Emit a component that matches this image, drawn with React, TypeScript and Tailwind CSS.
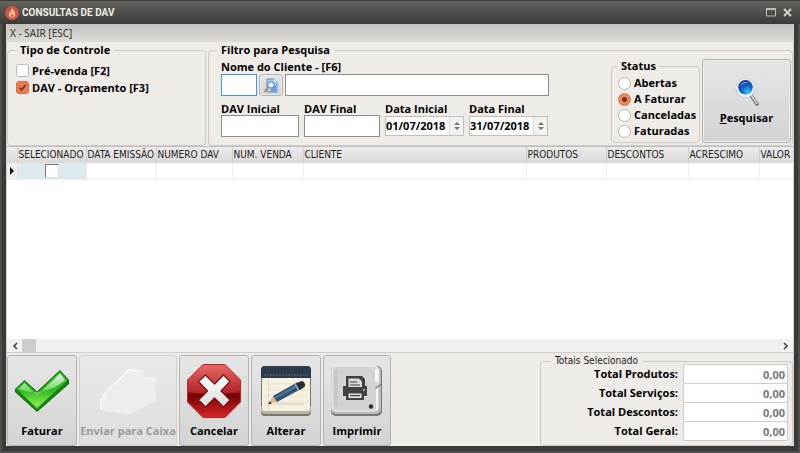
import { useState } from 'react'
import clsx from 'clsx'

interface Column {
  title: string
  width: string
}

const COLUMNS: Column[] = [
  { title: 'SELECIONADO', width: 'w-[69px]' },
  { title: 'DATA EMISSÃO', width: 'w-[70px]' },
  { title: 'NUMERO DAV', width: 'w-[76px]' },
  { title: 'NUM. VENDA', width: 'w-[71px]' },
  { title: 'CLIENTE', width: '' },
  { title: 'PRODUTOS', width: 'w-[80px]' },
  { title: 'DESCONTOS', width: 'w-[82px]' },
  { title: 'ACRESCIMO', width: 'w-[71px]' },
  { title: 'VALOR', width: 'w-[34px]' },
]

const STATUS = ['Abertas', 'A Faturar', 'Canceladas', 'Faturadas']

const TOTALS = [
  { id: 'produtos', label: 'Total Produtos:' },
  { id: 'servicos', label: 'Total Serviços:' },
  { id: 'descontos', label: 'Total Descontos:' },
  { id: 'geral', label: 'Total Geral:' },
]

const buttonFace = 'rounded-[3px] border border-[#b4b2b0] bg-linear-to-b from-[#e6e6e6] to-[#d3d3d3] shadow-[inset_0_0_0_1px_#ececec]'

function FlameIcon() {
  return (
    <svg viewBox="0 0 14 14" className="h-3.5 w-3.5 shrink-0">
      <circle cx="7" cy="7" r="7" fill="#cf5355" />
      <path d="M7.3 2c.5 2 2.9 3.4 2.9 6.2A3.2 3.2 0 0 1 7 11.6a3.2 3.2 0 0 1-3.2-3.3c0-1.3.6-2.2 1.1-2.9.1.8.4 1.2.8 1.4C5.7 5 6.3 3.3 7.3 2z" fill="#f7c57c" />
      <path d="M7.2 7.600c.2.8.9 1.200.9 2.200a1.100 1.100 0 0 1-2.200 0c0-.8.9-1.300 1.300-2.200z" fill="#cf5355" />
    </svg>
  )
}

function MagnifierIcon() {
  return (
    <svg viewBox="0 0 24 28" className="h-7 w-6">
      <defs>
        <radialGradient id="lens" cx="0.65" cy="0.8" r="0.8">
          <stop offset="0" stopColor="#36c8f5" />
          <stop offset="0.5" stopColor="#1565c4" />
          <stop offset="1" stopColor="#0a3a92" />
        </radialGradient>
      </defs>
      <path d="M16 17.5l6 8.500" stroke="#77797c" strokeWidth="3.600" strokeLinecap="round" />
      <path d="M16.300 17.300l5.500 8" stroke="#e4e6e8" strokeWidth="1.400" strokeLinecap="round" />
      <circle cx="10.500" cy="10" r="10" fill="#b9bfc7" />
      <circle cx="10.500" cy="9.800" r="9.300" fill="#f1f4f7" />
      <circle cx="10.500" cy="9.300" r="7.300" fill="url(#lens)" />
      <path d="M5 8a6 5.500 0 0 1 9-3.200c-3-.4-6.500.4-9 3.200z" fill="#9cc4ee" opacity=".8" />
    </svg>
  )
}

function LookupIcon() {
  return (
    <svg viewBox="0 0 14 15" className="h-[15px] w-3.5">
      <path d="M3 1h7l3 3v10H3z" fill="#b5d4f3" stroke="#5b8fd0" />
      <path d="M10 1v3h3z" fill="#e9f3fd" />
      <path d="M12 7v6.500H5z" fill="#6d9fe0" />
      <path d="M1 13.200l3.600-4" stroke="#c9854f" strokeWidth="2" strokeLinecap="round" />
      <circle cx="7" cy="6.800" r="3.200" fill="#eaf6ff" stroke="#5787c2" strokeWidth="1.100" />
    </svg>
  )
}

function CheckIcon() {
  return (
    <svg viewBox="0 0 56 54" className="h-[54px] w-14">
      <defs>
        <linearGradient id="green" x1="0" y1="0" x2="0" y2="1">
          <stop offset="0" stopColor="#3cc436" />
          <stop offset="0.500" stopColor="#2eb81c" />
          <stop offset="1" stopColor="#9af45e" />
        </linearGradient>
        <linearGradient id="gloss" x1="0" y1="0" x2="0" y2="1">
          <stop offset="0" stopColor="#fff" stopOpacity=".9" />
          <stop offset="1" stopColor="#c9f5b8" stopOpacity=".3" />
        </linearGradient>
      </defs>
      <path d="M1 25L10.500 16 23 27.500 46 6l9 10v4L23 48 1 28z" fill="#126b12" />
      <path d="M2.500 25L10.500 17.500 23 29.500 46 7.500l7.500 9L23 44.500z" fill="url(#green)" stroke="#26a51c" />
      <path d="M4.500 25l6-5.700L23 31.500 46 9.500l5 6.500C40 26 22 32 4.500 25z" fill="url(#gloss)" />
      <path d="M2.500 27.500L23 46l31-27" fill="none" stroke="#1d8a17" strokeWidth="1.200" />
    </svg>
  )
}

function SendIcon() {
  return (
    <svg viewBox="0 0 56 54" className="h-[54px] w-14">
      <path d="M1 35.500L4 30l3-1L24 10l5-5 13 2 2 6 10 2 2 22-28 14L1 46z" fill="#ededed" />
      <path d="M1 46V35.500h3V30l20-19 5-5.500 13 2.500M43 14l11 1 1 4" fill="none" stroke="#fff" strokeWidth="1.200" />
    </svg>
  )
}

function CancelIcon() {
  return (
    <svg viewBox="0 0 54 54" className="h-[54px] w-[54px]">
      <defs>
        <linearGradient id="red" x1="0" y1="0" x2="0" y2="1">
          <stop offset="0" stopColor="#e65757" />
          <stop offset="0.530" stopColor="#a80f12" />
          <stop offset="0.560" stopColor="#6d0204" />
          <stop offset="1" stopColor="#d8262a" />
        </linearGradient>
        <linearGradient id="cross" x1="0" y1="0" x2="0" y2="1">
          <stop offset="0" stopColor="#fff" />
          <stop offset="1" stopColor="#dcdcdc" />
        </linearGradient>
      </defs>
      <path d="M16 .5h22L53.500 16v22L38 53.500H16L.5 38V16z" fill="url(#red)" stroke="#b3272a" />
      <path d="M1 16L16 1h22l15 15v11c-16 4-36 4-52 1z" fill="#fff" opacity=".1" />
      <path d="M18.500 11l9 9 9-9 6.500 6.500-9 9.500 9 9-6.500 7-9-9-9 9-7-7 9-9-9-9.500z" fill="url(#cross)" stroke="#7c0d10" strokeWidth="1.200" strokeLinejoin="round" />
    </svg>
  )
}

function EditIcon() {
  return (
    <svg viewBox="0 0 50 50" className="h-[50px] w-[50px]">
      <rect width="50" height="50" rx="4" fill="#77766f" />
      <path d="M0 40h50v4a4 4 0 0 1-4 4H4a4 4 0 0 1-4-4z" fill="#b9b5a4" />
      <rect x="1" y="2" width="48" height="43" rx="3" fill="#f5f0df" />
      <path d="M0 12V4a4 4 0 0 1 4-4h42a4 4 0 0 1 4 4v8z" fill="#2c3b4c" />
      <path d="M3 9h44" stroke="#5c6a79" strokeDasharray="2 1" />
      <path d="M2 18h46M2 24h46M2 30h46M2 36h46" stroke="#e4decb" strokeWidth=".8" />
      <path d="M7.500 13v31" stroke="#ead6c4" />
      <path d="M14 38h29" stroke="#ddd6c4" strokeWidth="1.500" />
      <path d="M7 38.500l5-8.500 4 6z" fill="#e5b98a" />
      <path d="M7 38.500l2-3.500 1.700 2.500z" fill="#333" />
      <path d="M12 30l24-13.500 4 6.500-24 13z" fill="#345273" />
      <path d="M13 31.500L37 18l1 1.700-24 13.500z" fill="#55759a" />
      <path d="M35 17l6-2c2 0 4 4 2.500 6L39 24z" fill="#292d31" />
      <path d="M34 18l3.500 6.500" stroke="#a7abb0" strokeWidth="1.500" />
    </svg>
  )
}

function PrintIcon() {
  return (
    <svg viewBox="0 0 52 52" className="h-[52px] w-[52px]">
      <rect x="0" y="1" width="51" height="50" rx="5" fill="#777" />
      <rect x="0" y="1" width="50" height="48" rx="5" fill="#bcbcbc" />
      <rect x="1" y="1" width="46" height="45" rx="4" fill="#d3d3d3" stroke="#f2f2f2" />
      <path d="M4 5v36M6 5v36" stroke="#b5b5b5" strokeWidth=".8" />
      <path d="M44 4h4v13h-4z" fill="#f5f5f5" />
      <path d="M44.500 23l6-4" stroke="#777" strokeWidth="1.200" />
      <path d="M46 24v21" stroke="#f4f4f4" strokeWidth="2" />
      <path d="M15 11h16l3 3v7h2v10h-3v4H15v-4h-3V21h3z" fill="#404142" />
      <path d="M17.500 13.500h10.500l3 3V22h-13.500z" fill="#d8d8d8" />
      <path d="M17.500 28.500h13v4.500h-13z" fill="#e4e4e4" />
      <path d="M19 17h7M19 20h10M19 30.700h10" stroke="#404142" strokeWidth="1.200" />
      <circle cx="33" cy="25" r=".9" fill="#ddd" />
      <circle cx="40" cy="41.500" r="2.200" fill="#2f2f2f" />
    </svg>
  )
}

const ACTIONS = [
  { label: 'Faturar', width: 'w-[70px]', Icon: CheckIcon },
  { label: 'Enviar para Caixa', width: 'w-[98px]', Icon: SendIcon, disabled: true },
  { label: 'Cancelar', width: 'w-[70px]', Icon: CancelIcon },
  { label: 'Alterar', width: 'w-[70px]', Icon: EditIcon },
  { label: 'Imprimir', width: 'w-[68px]', Icon: PrintIcon },
]

function CheckOption({ label, checked, onChange }: { label: string; checked: boolean; onChange: () => void }) {
  return (
    <label className="flex h-[17px] items-center gap-[3px]">
      <span className="relative flex">
        <input
          type="checkbox"
          checked={checked}
          onChange={onChange}
          className="h-[13px] w-[13px] appearance-none rounded-[3px] border border-[#bbb6b2] bg-white checked:border-[#c5714c] checked:bg-[#ee7b50]"
        />
        {checked && (
          <svg viewBox="0 0 13 13" className="pointer-events-none absolute inset-0 h-[13px] w-[13px]">
            <path d="M3.500 6.500l2 2.500L9.500 4" fill="none" stroke="#7a3b22" strokeWidth="2" />
          </svg>
        )}
      </span>
      {label}
    </label>
  )
}

function TextField({ id, label, width }: { id: string; label: string; width: string }) {
  return (
    <div className={width}>
      <label htmlFor={id} className="block h-[15px] leading-[17px]">{label}</label>
      <input id={id} className="block h-[22px] w-full border border-[#8e8d8b] bg-white px-1 outline-none" />
    </div>
  )
}

function DateField({ id, label, value, onChange }: { id: string; label: string; value: string; onChange: (v: string) => void }) {
  return (
    <div className="w-[79px]">
      <label htmlFor={id} className="block h-[15px] leading-[17px] whitespace-nowrap">{label}</label>
      <div className="mt-px flex h-5 border border-[#c2bebb] bg-white">
        <input id={id} value={value} onChange={e => onChange(e.target.value)} className="w-0 flex-1 outline-none" />
        <div className="flex w-3.5 flex-col items-center justify-center gap-0.5 border-l border-[#dad7d4] bg-[#f3f1ef]">
          <button type="button" aria-label="Aumentar" className="block">
            <svg viewBox="0 0 6 3" className="block h-[3px] w-1.5"><path d="M3 0l3 3H0z" fill="#777" /></svg>
          </button>
          <button type="button" aria-label="Diminuir" className="block">
            <svg viewBox="0 0 6 3" className="block h-[3px] w-1.5"><path d="M0 0h6L3 3z" fill="#777" /></svg>
          </button>
        </div>
      </div>
    </div>
  )
}

export default function App() {
  const [preVenda, setPreVenda] = useState(false)
  const [orcamento, setOrcamento] = useState(true)
  const [status, setStatus] = useState('A Faturar')
  const [dataInicial, setDataInicial] = useState('01/07/2018')
  const [dataFinal, setDataFinal] = useState('31/07/2018')

  return (
    <div className="flex min-h-screen flex-col bg-[#3b3a36] pb-[7px] font-['Open_Sans','Noto_Sans',sans-serif] text-[11px] leading-4 text-black shadow-[inset_0_0_0_2px_#504f4b]">
      <header className="flex h-6 items-center gap-[3px] border-t border-[#3c3b38] bg-linear-to-b from-[#66645f] to-[#3b3a36] pr-2 pl-[5px]">
        <FlameIcon />
        <h1 className="flex-1 font-['Roboto',sans-serif] text-[10px] font-bold text-[#efece6]">CONSULTAS DE DAV</h1>
        <button type="button" aria-label="Maximizar" className="mr-1">
          <svg viewBox="0 0 10 9" className="h-[9px] w-2.5">
            <path d="M.5 1h9v7h-9z" fill="none" stroke="#bdbbb5" />
            <path d="M0 1h10" stroke="#bdbbb5" strokeWidth="2" />
          </svg>
        </button>
        <button type="button" aria-label="Fechar">
          <svg viewBox="0 0 9 9" className="h-[9px] w-[9px]">
            <path d="M1 1l7 7M8 1L1 8" stroke="#d2d0ca" strokeWidth="2" />
          </svg>
        </button>
      </header>

      <div className="mx-1.5 flex flex-1 flex-col border-x border-[#d5d0cb] bg-[#efebe7]">
        <nav className="flex h-[18px] items-center bg-linear-to-b from-[#c5c1be] to-[#dfdbd7] px-[3px]">
          <button type="button" className="font-['Noto_Sans',sans-serif] text-[10px] text-[#333]">X - SAIR [ESC]</button>
        </nav>

        <form className="flex h-[104px] gap-0.5 font-bold" onSubmit={e => e.preventDefault()}>
          <fieldset className="w-[199px] rounded-[4px] border border-[#cdc8c4] px-2">
            <legend className="px-1">Tipo de Controle</legend>
            <div className="pt-1">
              <CheckOption label="Pré-venda [F2]" checked={preVenda} onChange={() => setPreVenda(!preVenda)} />
              <CheckOption label="DAV - Orçamento [F3]" checked={orcamento} onChange={() => setOrcamento(!orcamento)} />
            </div>
          </fieldset>

          <fieldset className="min-w-0 flex-1 rounded-[4px] border border-[#cdc8c4] pr-px pl-3">
            <legend className="-ml-1 px-1">Filtro para Pesquisa</legend>
            <div className="flex gap-0.5">
              <div className="flex-1">
                <label htmlFor="cliente" className="block h-4 leading-[17px]">Nome do Cliente - [F6]</label>
                <div className="flex h-[22px]">
                  <input id="cliente" autoFocus className="w-9 border border-[#3f97e0] bg-white px-0.5 outline-none" />
                  <button type="button" aria-label="Procurar cliente" className={clsx(buttonFace, 'mx-0.5 flex w-6 items-center justify-center')}>
                    <LookupIcon />
                  </button>
                  <input aria-label="Nome do Cliente" className="w-[264px] border border-[#8e8d8b] bg-white px-1 outline-none" />
                </div>
                <div className="mt-1 flex gap-[5px]">
                  <TextField id="dav-inicial" label="DAV Inicial" width="w-[78px]" />
                  <TextField id="dav-final" label="DAV Final" width="w-[76px]" />
                  <DateField id="data-inicial" label="Data Inicial" value={dataInicial} onChange={setDataInicial} />
                  <DateField id="data-final" label="Data Final" value={dataFinal} onChange={setDataFinal} />
                </div>
              </div>

              <fieldset className="h-[85px] w-[89px] rounded-[4px] border border-[#cdc8c4] pr-0.5 pl-1.5">
                <legend className="px-[3px]">Status</legend>
                <div className="pt-px">
                  {STATUS.map(item => (
                    <label key={item} className="flex h-4 items-center gap-[3px] whitespace-nowrap">
                      <input
                        type="radio"
                        name="status"
                        checked={status === item}
                        onChange={() => setStatus(item)}
                        className="h-[13px] w-[13px] shrink-0 appearance-none rounded-full border border-[#bbb6b2] bg-white checked:border-[#cd7850] checked:bg-[radial-gradient(circle,#713820_0_2px,#ee855d_3px)]"
                      />
                      {item}
                    </label>
                  ))}
                </div>
              </fieldset>

              <button type="submit" className={clsx(buttonFace, 'mt-px flex h-[84px] w-[89px] flex-col items-center pt-[18px] font-bold')}>
                <MagnifierIcon />
                <span className="mt-1"><span className="underline">P</span>esquisar</span>
              </button>
            </div>
          </fieldset>
        </form>

        <section className="flex flex-1 flex-col border-t border-[#c4c0bd] bg-white">
          <table className="w-full table-fixed border-collapse text-left font-['DejaVu_Sans_Condensed','DejaVu_Sans',sans-serif] text-[10px] text-[#222]">
            <thead>
              <tr className="h-4 bg-linear-to-b from-[#edebea] to-[#dcdad8]">
                <th className="w-2.5 border-r border-[#d0cdca]" aria-label="Linha atual" />
                {COLUMNS.map(col => (
                  <th key={col.title} className={clsx(col.width, 'border-r border-[#d0cdca] p-0 pl-px font-normal whitespace-nowrap last:border-r-0')}>
                    {col.title}
                  </th>
                ))}
              </tr>
            </thead>
            <tbody>
              <tr className="h-4 border-b border-[#eeeeee]">
                <td className="border-r border-[#e8e6e4] bg-[#f1efed] p-0">
                  <svg viewBox="0 0 4 8" className="mx-auto h-2 w-1"><path d="M0 0l4 4-4 4z" fill="#111" /></svg>
                </td>
                <td className="border-r border-[#eeeeee] bg-[#dce9ee] p-0">
                  <input type="checkbox" aria-label="Selecionado" className="mx-auto block h-3.5 w-3.5 appearance-none border border-[#ddd] border-t-[#777] border-l-[#777] bg-white checked:bg-[#777]" />
                </td>
                {COLUMNS.slice(1).map(col => (
                  <td key={col.title} className="border-r border-[#eeeeee] p-0 last:border-r-0" />
                ))}
              </tr>
            </tbody>
          </table>
        </section>

        <div className="flex h-3.5 items-center border-b border-[#d0cdca] bg-[#f0f0f0]">
          <button type="button" aria-label="Rolar para a esquerda" className="flex w-[15px] justify-center">
            <svg viewBox="0 0 6 8" className="h-2 w-1.5"><path d="M5 1L2 4l3 3" fill="none" stroke="#444" strokeWidth="1.600" /></svg>
          </button>
          <div className="h-full w-3.5 bg-[#cdcdcd]" />
          <div className="flex-1" />
          <button type="button" aria-label="Rolar para a direita" className="flex w-[15px] justify-center">
            <svg viewBox="0 0 6 8" className="h-2 w-1.5"><path d="M1 1l3 3-3 3" fill="none" stroke="#444" strokeWidth="1.600" /></svg>
          </button>
        </div>

        <footer className="flex items-start justify-between pt-0.5">
          <div className="flex gap-0.5">
            {ACTIONS.map(({ label, width, Icon, disabled }) => (
              <button
                key={label}
                type="button"
                disabled={disabled}
                className={clsx(
                  width,
                  'flex h-[91px] flex-col items-center rounded-[3px] border font-bold whitespace-nowrap',
                  disabled
                    ? 'border-[#d2cfcc] bg-linear-to-b from-[#e9e9e9] to-[#dedede] text-[#9a9a9a]'
                    : 'border-[#b4b2b0] bg-linear-to-b from-[#e6e6e6] to-[#d3d3d3]',
                )}
              >
                <span className="flex h-[67px] items-center pt-0.5"><Icon /></span>
                {label}
              </button>
            ))}
          </div>

          <fieldset className="h-[91px] w-[253px] rounded-[4px] border border-[#cdc8c4] pr-1">
            <legend className="ml-2.5 h-3 px-1 font-['DejaVu_Sans_Condensed','DejaVu_Sans',sans-serif] text-[10px] leading-3 text-[#222]">Totais Selecionado</legend>
            <div className="-mt-[3px]">
              {TOTALS.map(total => (
                <div key={total.id} className="flex h-[19px] items-center justify-end gap-[5px] font-bold">
                  <label htmlFor={total.id} className="leading-3">{total.label}</label>
                  <input id={total.id} readOnly value="0,00" className="h-5 w-[105px] self-start border border-[#d0cdca] bg-white px-0.5 text-right font-bold text-[#777] outline-none" />
                </div>
              ))}
            </div>
          </fieldset>
        </footer>
      </div>
    </div>
  )
}
